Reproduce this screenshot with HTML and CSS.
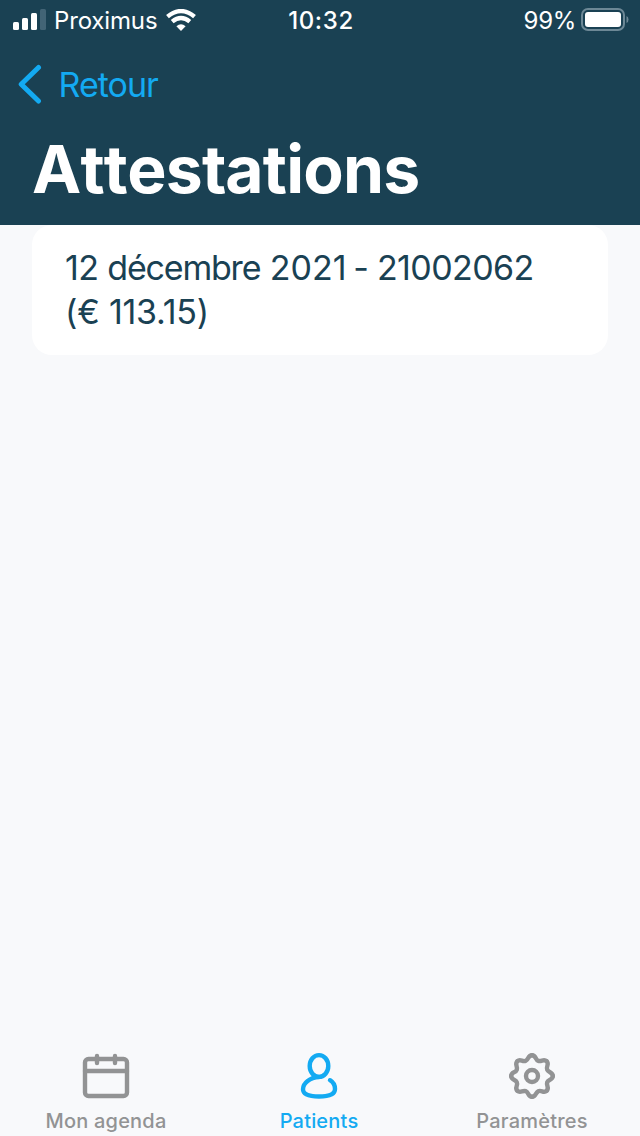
FILE: index.html
```html
<!DOCTYPE html>
<html lang="fr">
<head>
<meta charset="utf-8">
<title>Attestations</title>
<link rel="stylesheet" href="styles.css">
</head>
<body>
<div class="app">
  <header class="header">
    <div class="status">
      <div class="carrier">
        <svg class="signal" width="34" height="22" viewBox="0 0 34 22">
          <rect x="0" y="13" width="6" height="8" rx="1.5"/><rect x="9" y="9" width="6" height="12" rx="1.5"/><rect x="18" y="4" width="6" height="17" rx="1.5"/><rect class="faint" x="27" y="0" width="6" height="21" rx="1.5"/>
        </svg>
        <span class="carrier-name">Proximus</span>
        <svg class="wifi" width="30" height="22" viewBox="0 0 30 22">
          <path class="wave" d="M1.5 7.6Q15-3.4 28.5 7.6"/><path class="wave" d="M6.2 12.6Q15 5.4 23.8 12.6"/><path d="M10.4 17.3Q15 13 19.6 17.3L15 22Z"/>
        </svg>
      </div>
      <span class="time">10:32</span>
      <div class="battery">
        <span class="percent">99%</span>
        <svg width="48" height="24" viewBox="0 0 48 24">
          <rect class="shell" x="1" y="1" width="42" height="21" rx="6"/><rect x="4" y="4" width="36" height="15" rx="3"/><path class="nub" d="M45.5 8Q47.5 8.5 47.5 11.5T45.5 15Z"/>
        </svg>
      </div>
    </div>
    <a class="back">
      <svg width="24" height="40" viewBox="0 0 24 40"><path d="M20.5 3.5L3.2 20.2L20.5 37"/></svg>
      <span>Retour</span>
    </a>
    <h1 class="title">Attestations</h1>
  </header>
  <main class="content">
    <article class="card">
      <div class="line"><span class="day">12 </span><span class="month">décembre</span> <span class="year">2021 </span><span class="dash">- </span><span class="number">21002062</span></div>
      <div class="line amount">(€ 113.15)</div>
    </article>
  </main>
  <nav class="tabs">
    <a class="tab">
      <svg width="48" height="48" viewBox="0 0 48 48">
        <rect x="3" y="7" width="42" height="37" rx="3.5"/><path d="M3 19H45M15 4V11M33 4V11"/>
      </svg>
      <span class="agenda">Mon agenda</span>
    </a>
    <a class="tab active">
      <svg width="48" height="48" viewBox="0 0 48 48">
        <ellipse cx="24" cy="14" rx="9.3" ry="10.9"/><path d="M24 25C15 25.5 8 31 8 37.3C8 43 15 44.5 24 44.5S40 43 40 37C40 33 38 30 35 28.2"/>
      </svg>
      <span class="patients">Patients</span>
    </a>
    <a class="tab">
      <svg width="48" height="48" viewBox="-24 -24 48 48">
        <defs><path id="tooth" d="M0-20.8C4.2-20.8 3-16.3 6.3-15.2S11.8-17.6 14.7-14.7"/></defs>
        <use href="#tooth"/><use href="#tooth" transform="rotate(45)"/><use href="#tooth" transform="rotate(90)"/><use href="#tooth" transform="rotate(135)"/><use href="#tooth" transform="rotate(180)"/><use href="#tooth" transform="rotate(225)"/><use href="#tooth" transform="rotate(270)"/><use href="#tooth" transform="rotate(315)"/>
        <circle r="6"/>
      </svg>
      <span class="settings">Paramètres</span>
    </a>
  </nav>
</div>
</body>
</html>
```

FILE: styles.css
```css
* { box-sizing: border-box; }
body { margin: 0; font-family: Inter, "Liberation Sans", sans-serif; }
svg { display: block; flex: none; }
.app { display: flex; flex-direction: column; width: 640px; height: 1136px; background: #f8f9fb; }
.header { height: 225px; background: #1a4153; color: #fff; }
.status { display: grid; grid-template-columns: 1fr auto 1fr; height: 40px; padding: 0 11px 0 13px; font-size: 24px; line-height: 42px; white-space: nowrap; }
.status svg { fill: #fff; }
.carrier { display: flex; }
.signal { margin-top: 9px; }
.signal .faint { fill: #426476; }
.carrier-name { width: 119px; padding-left: 7px; letter-spacing: -0.15px; }
.wifi { margin: 9px 0 0; }
.wifi .wave { fill: none; stroke: #fff; stroke-width: 4.4; }
.time { font-weight: 500; letter-spacing: 0.6px; }
.battery { display: flex; justify-content: flex-end; gap: 5px; }
.percent { letter-spacing: -0.3px; }
.battery svg { margin-top: 8px; }
.battery .shell { fill: none; stroke: #6d8896; stroke-width: 2; }
.battery .nub { fill: #6d8896; }
.back { display: flex; align-items: center; gap: 16.5px; height: 88px; padding-left: 18px; color: #13aaf2; font-size: 34px; letter-spacing: -1px; }
.back svg { fill: none; stroke: #13aaf2; stroke-width: 5; stroke-linecap: round; stroke-linejoin: round; }
.title { margin: 0; padding-left: 32px; font-size: 66px; font-weight: 700; line-height: 82px; font-kerning: none; font-feature-settings: "calt" 0; letter-spacing: -0.8px; }
.content { flex: 1; padding: 0 32px; }
.card { height: 129.5px; padding: 21px 33px; border-radius: 20px; background: #fff; color: #1a4153; font-size: 34px; line-height: 44px; white-space: nowrap; }
.day { letter-spacing: -0.6px; }
.month { letter-spacing: -1.2px; }
.year { word-spacing: -3px; }
.dash { letter-spacing: -0.7px; }
.number { letter-spacing: -0.6px; }
.amount { letter-spacing: -0.25px; }
.tabs { display: grid; grid-template-columns: 212px 214px 212px; height: 88px; }
.tab { display: flex; flex-direction: column; align-items: center; padding-top: 4px; color: #929394; font-size: 20px; font-weight: 500; line-height: 26px; letter-spacing: 0.2px; }
.tab svg { margin-bottom: 8px; fill: none; stroke: currentColor; stroke-width: 4.4; stroke-linecap: round; stroke-linejoin: round; }
.active { color: #13aaf2; }
```
